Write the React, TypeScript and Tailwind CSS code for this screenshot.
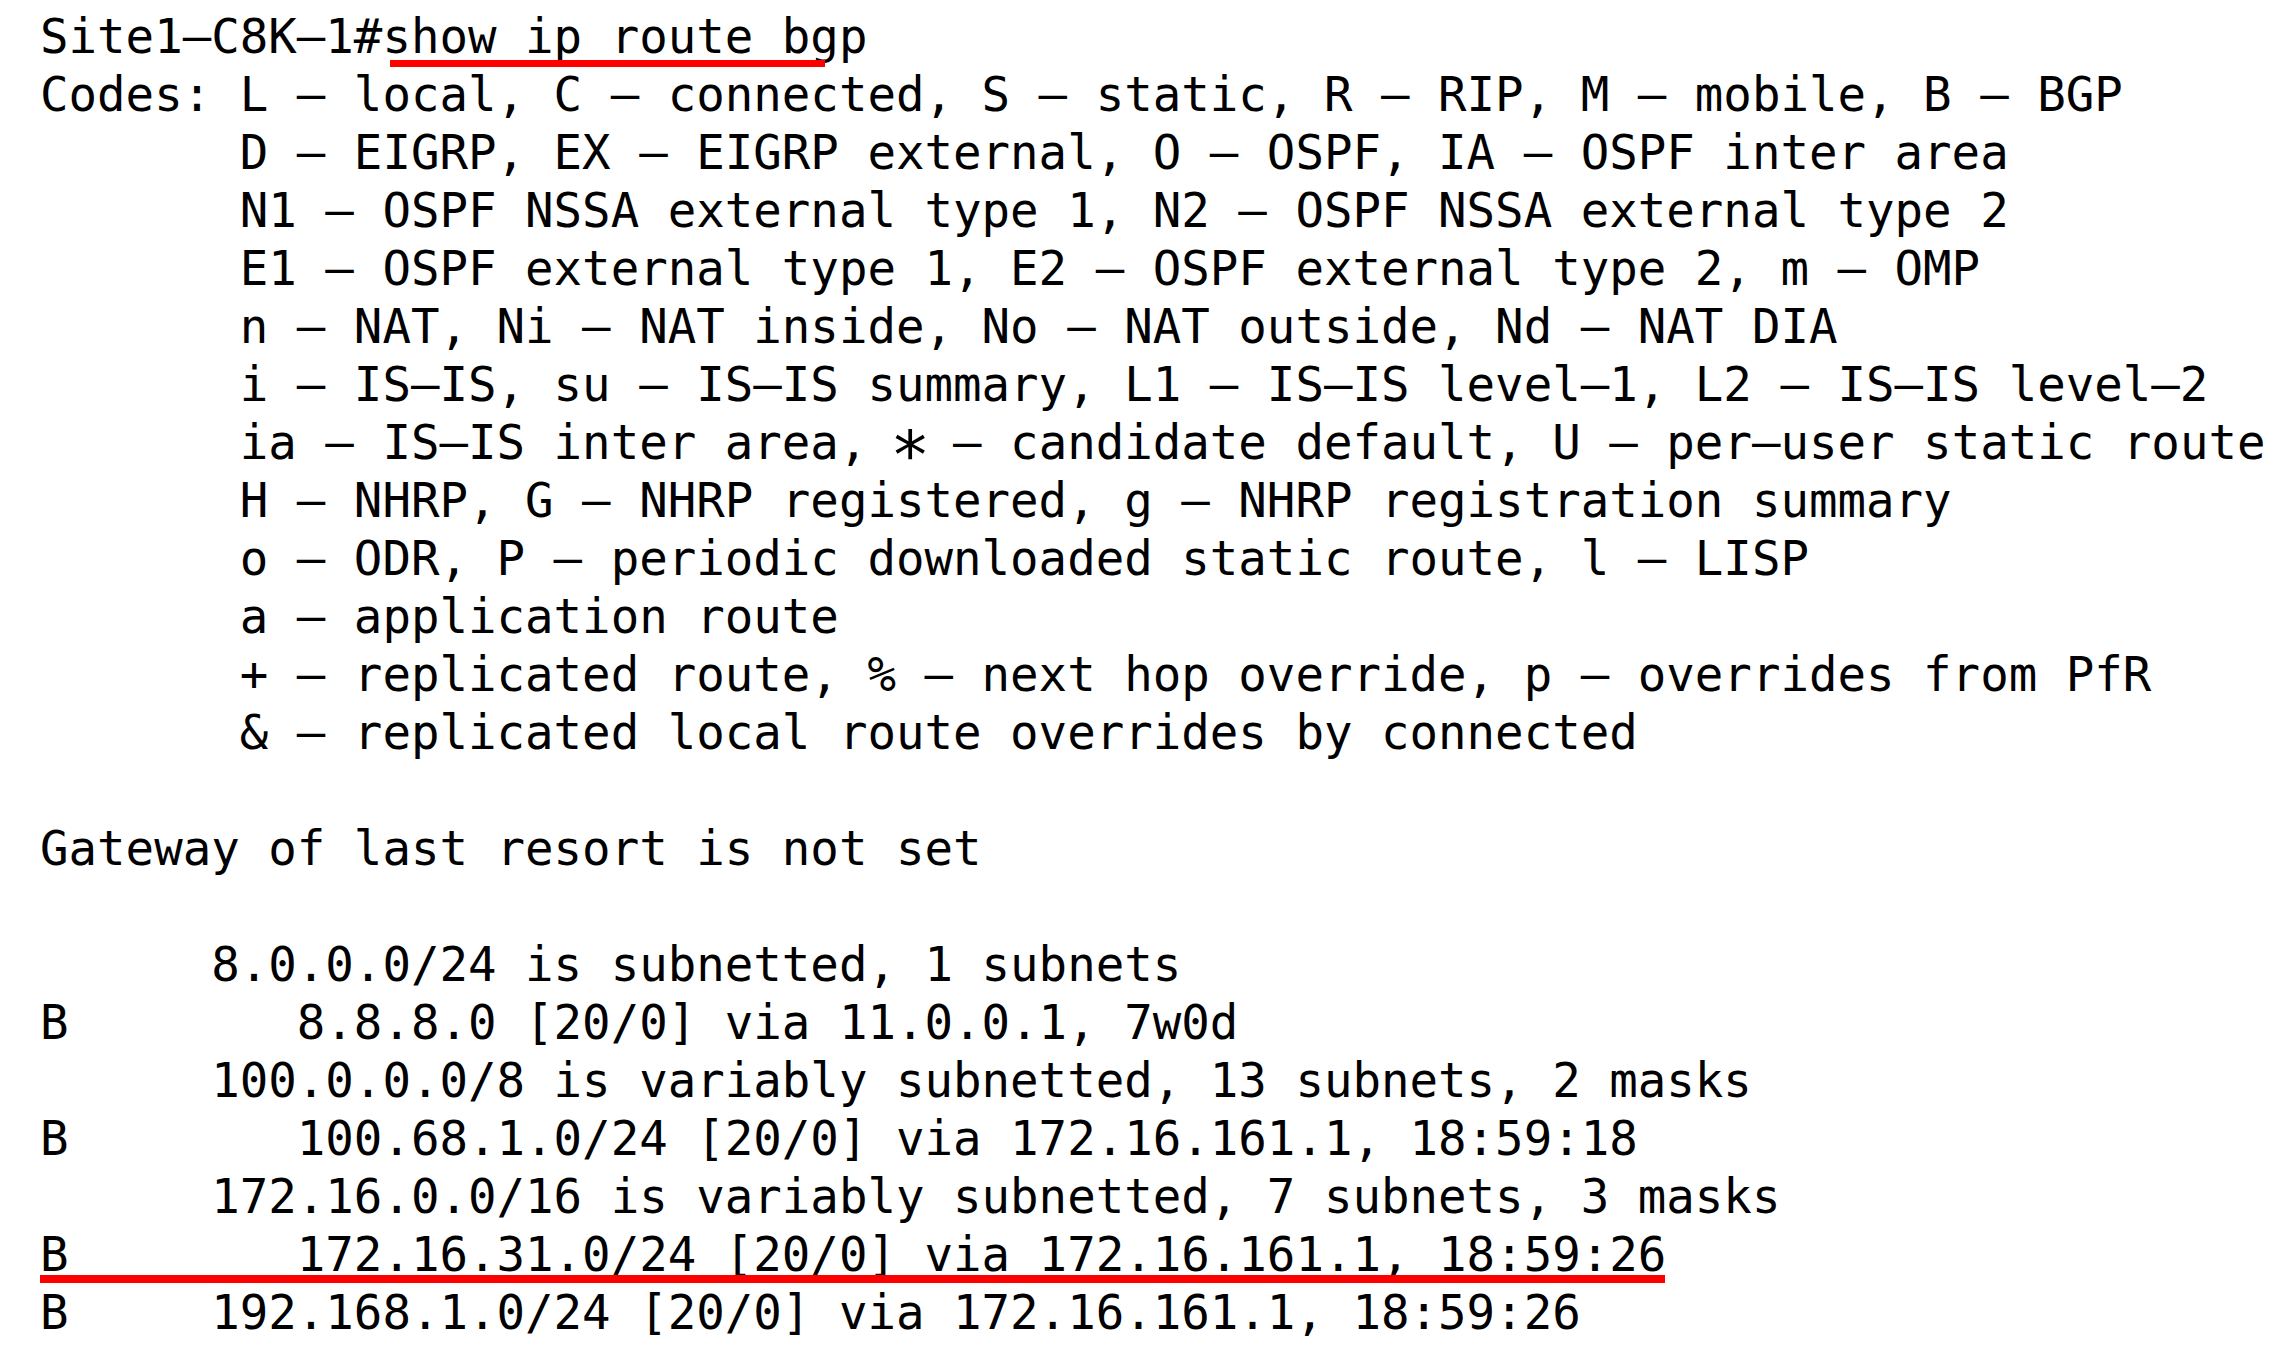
import { ReactNode } from 'react';

const lines: ReactNode[] = [
  'Site1–C8K–1#show ip route bgp',
  'Codes: L – local, C – connected, S – static, R – RIP, M – mobile, B – BGP',
  '       D – EIGRP, EX – EIGRP external, O – OSPF, IA – OSPF inter area',
  '       N1 – OSPF NSSA external type 1, N2 – OSPF NSSA external type 2',
  '       E1 – OSPF external type 1, E2 – OSPF external type 2, m – OMP',
  '       n – NAT, Ni – NAT inside, No – NAT outside, Nd – NAT DIA',
  '       i – IS–IS, su – IS–IS summary, L1 – IS–IS level–1, L2 – IS–IS level–2',
  <>
    {'       ia – IS–IS inter area, '}
    <span className="inline-block scale-[1.4]">∗</span>
    {' – candidate default, U – per–user static route'}
  </>,
  '       H – NHRP, G – NHRP registered, g – NHRP registration summary',
  '       o – ODR, P – periodic downloaded static route, l – LISP',
  '       a – application route',
  '       + – replicated route, % – next hop override, p – overrides from PfR',
  '       & – replicated local route overrides by connected',
  '',
  'Gateway of last resort is not set',
  '',
  '      8.0.0.0/24 is subnetted, 1 subnets',
  'B        8.8.8.0 [20/0] via 11.0.0.1, 7w0d',
  '      100.0.0.0/8 is variably subnetted, 13 subnets, 2 masks',
  'B        100.68.1.0/24 [20/0] via 172.16.161.1, 18:59:18',
  '      172.16.0.0/16 is variably subnetted, 7 subnets, 3 masks',
  'B        172.16.31.0/24 [20/0] via 172.16.161.1, 18:59:26',
  'B     192.168.1.0/24 [20/0] via 172.16.161.1, 18:59:26',
];

export default function App() {
  return (
    <div className="relative w-[2274px] h-[1356px] bg-white overflow-hidden">
      <pre className="pt-[8px] pl-[40px] m-0 text-black font-['DejaVu_Sans_Mono',monospace] text-[47.4px] leading-[58px] whitespace-pre">
        {lines.map((l, i) => (
          <div key={i} className="h-[58px]">{l}</div>
        ))}
      </pre>

      {/* annotation underlines */}
      <div className="absolute left-[390px] top-[60px] w-[435px] h-[7px] bg-[#ff0000]" />
      <div className="absolute left-[40px] top-[1275px] w-[1625px] h-[8px] bg-[#ff0000]" />
    </div>
  );
}
